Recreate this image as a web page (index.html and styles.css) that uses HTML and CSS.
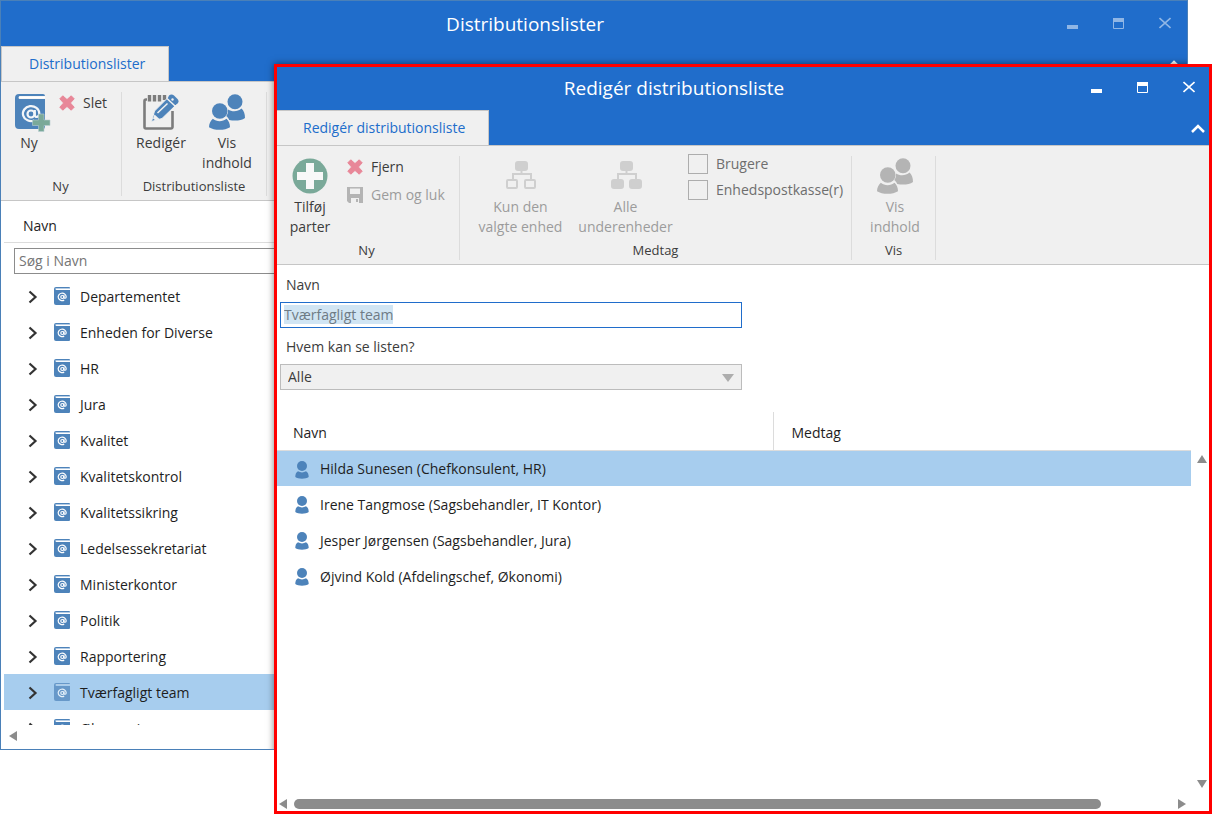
FILE: index.html
```html
<!DOCTYPE html>
<html lang="da">
<head>
  <meta charset="UTF-8">
  <title>Distributionslister</title>
  <link rel="stylesheet" href="styles.css">
</head>
<body>

  <!-- Shared icons -->
  <svg width="0" height="0" class="icon-defs">
    <symbol id="book" viewBox="0 0 16 18">
      <path d="M2 0h13a1 1 0 0 1 1 1H2.500a1 1 0 0 0 0 2H16v14a1 1 0 0 1-1 1H2a2 2 0 0 1-2-2V2a2 2 0 0 1 2-2z" fill="#4d83ba"/>
      <path d="M2 1.500H16" stroke="#b5cce4" stroke-width="1"/>
      <g fill="none" stroke="#fff" stroke-width="1.200">
        <circle cx="8.300" cy="10" r="1.500"/>
        <path d="M10 8.300v2.200c0 1.200 2.200 1 2.200-.8a4 3.700 0 1 0-2 3.400"/>
      </g>
    </symbol>
    <symbol id="people" viewBox="0 0 36 36">
      <circle cx="26" cy="7.800" r="7.500"/>
      <path d="M19 15.500c4 2.500 9.500 2.500 13.500-1 2.300 2 3.500 5.500 3.500 9.500-3.500 2.700-10.300 3-15.800 2-.7-2-1.700-3-3-4 1.800-2 2-4 1.800-6.500z"/>
      <circle cx="10.800" cy="17" r="7.800"/>
      <path d="M3.800 24.800c3.700 3.200 10 3.200 13.700 0 2.300 2 3.500 5 3.500 8.500-5 3.400-16 3.400-21 0 0-3.500 1.500-6.500 3.800-8.500z"/>
    </symbol>
    <symbol id="person" viewBox="0 0 14 18">
      <circle cx="7" cy="5" r="5"/>
      <path d="M3 10.300c2.500 1.500 5.500 1.500 8 0 2 1 2.700 3.200 2.700 5.700-2.700 2.200-10.700 2.200-13.400 0 0-2.500.7-4.700 2.700-5.700z"/>
    </symbol>
    <symbol id="cross" viewBox="0 0 16 16">
      <path d="M3.800 .8 8 4.600l4.200-3.800 3 3L11.400 8l3.800 4.200-3 3L8 11.400l-4.200 3.800-3-3L4.600 8 .8 3.800z" fill="#e88798" stroke="#e88798" stroke-linejoin="round"/>
    </symbol>
    <symbol id="chevron" viewBox="0 0 10 14">
      <path d="M1.500 1.500 7.500 7l-6 5.500" fill="none" stroke="#333" stroke-width="2.200"/>
    </symbol>
    <symbol id="collapse" viewBox="0 0 14 9">
      <path d="M1 8l6-6 6 6" fill="none" stroke="#fff" stroke-width="2.500"/>
    </symbol>
    <symbol id="minimize" viewBox="0 0 12 12">
      <path d="M0 8h11v4H0z" fill="#fff"/>
    </symbol>
    <symbol id="maximize" viewBox="0 0 12 12">
      <path d="M.5 1.500h10v10H.5z" fill="none" stroke="#fff"/>
      <path d="M0 1h11v4H0z" fill="#fff"/>
    </symbol>
    <symbol id="close" viewBox="0 0 12 12">
      <path d="M.5 1l11 10M11.500 1l-11 10" fill="none" stroke="#fff" stroke-width="1.600"/>
    </symbol>
  </svg>

  <main class="desktop">

    <!-- Distribution lists -->
    <section class="window window-lists">
      <header class="titlebar">
        <h1 class="title">Distributionslister</h1>
        <div class="controls">
          <button aria-label="Minimer"><svg width="12" height="12"><use href="#minimize"/></svg></button>
          <button aria-label="Maksimer"><svg width="12" height="12"><use href="#maximize"/></svg></button>
          <button aria-label="Luk"><svg width="12" height="12"><use href="#close"/></svg></button>
        </div>
      </header>
      <nav class="tabs">
        <button class="tab">Distributionslister</button>
        <button class="collapse" aria-label="Skjul bånd"><svg width="14" height="9"><use href="#collapse"/></svg></button>
      </nav>

      <div class="ribbon">
        <div class="group group-new">
          <div class="tools">
            <button class="tool tool-narrow">
              <svg class="icon-new" width="36" height="38" viewBox="0 0 36 38">
                <path d="M4 0h24a2 2 0 0 1 2 2H5a1.500 1.500 0 0 0 0 3h25v28a2 2 0 0 1-2 2H4a4 4 0 0 1-4-4V4a4 4 0 0 1 4-4z" fill="#4d83ba"/>
                <path d="M4 3.500H30" stroke="#fff" stroke-width="2"/>
                <g fill="none" stroke="#f4f6f8" stroke-width="2.200">
                  <circle cx="16" cy="20" r="3.500"/>
                  <path d="M19.800 16v5c0 3 4.500 2.500 4.500-1.500a8.200 7.500 0 1 0-5 7"/>
                </g>
                <path d="M23.500 20h5.500v6h6v5.500h-6v6h-5.500v-6h-6V26h6z" fill="#7aa999" stroke="#b9cfd2" stroke-width=".6"/>
              </svg>
              <span>Ny</span>
            </button>
            <div class="small-tools">
              <button class="small-tool"><svg width="16" height="16"><use href="#cross"/></svg>Slet</button>
            </div>
          </div>
          <div class="group-name">Ny</div>
        </div>
        <div class="group group-list">
          <div class="tools">
            <button class="tool">
              <svg width="36" height="36" viewBox="0 0 36 36">
                <path d="M4 5.500H3A1.500 1.500 0 0 0 1.500 7v26A1.500 1.500 0 0 0 3 34.500h25a1.500 1.500 0 0 0 1.500-1.500V17" fill="none" stroke="#7c7c7c" stroke-width="2.600"/>
                <path d="M6.500 1v6.500M11.500 1v6.500M16.500 1v6.500M21.500 1v5" stroke="#7c7c7c" stroke-width="3.400"/>
                <path d="M8.500 27.500 11.500 17 26 2.500 34 10 19 24.500z" fill="#4d83ba" stroke="#f0f0f0" stroke-width="1"/>
                <path d="M26 1.500Q28.500-.5 31 1.500L34.500 5Q36.500 7 34.500 9.500L32.500 11 25 4z" fill="#4d83ba"/>
                <path d="M24 4.500 32 12M14.500 19 24.500 9.500" stroke="#f0f0f0" stroke-width="1.500"/>
                <path d="M11.500 20.500l5 4.500-4 1.500-2.500-2z" fill="#f0f0f0"/>
                <circle cx="29.500" cy="5.500" r="1.200" fill="#f0f0f0"/>
              </svg>
              <span>Redigér</span>
            </button>
            <button class="tool">
              <svg width="36" height="36" fill="#4d83ba"><use href="#people"/></svg>
              <span>Vis<br>indhold</span>
            </button>
          </div>
          <div class="group-name">Distributionsliste</div>
        </div>
      </div>

      <div class="list-panel">
        <div class="list-header">Navn</div>
        <input class="search" type="text" placeholder="Søg i Navn" aria-label="Søg i Navn">
        <ul class="tree">
          <li><svg class="chevron"><use href="#chevron"/></svg><svg class="book"><use href="#book"/></svg>Departementet</li>
          <li><svg class="chevron"><use href="#chevron"/></svg><svg class="book"><use href="#book"/></svg>Enheden for Diverse</li>
          <li><svg class="chevron"><use href="#chevron"/></svg><svg class="book"><use href="#book"/></svg>HR</li>
          <li><svg class="chevron"><use href="#chevron"/></svg><svg class="book"><use href="#book"/></svg>Jura</li>
          <li><svg class="chevron"><use href="#chevron"/></svg><svg class="book"><use href="#book"/></svg>Kvalitet</li>
          <li><svg class="chevron"><use href="#chevron"/></svg><svg class="book"><use href="#book"/></svg>Kvalitetskontrol</li>
          <li><svg class="chevron"><use href="#chevron"/></svg><svg class="book"><use href="#book"/></svg>Kvalitetssikring</li>
          <li><svg class="chevron"><use href="#chevron"/></svg><svg class="book"><use href="#book"/></svg>Ledelsessekretariat</li>
          <li><svg class="chevron"><use href="#chevron"/></svg><svg class="book"><use href="#book"/></svg>Ministerkontor</li>
          <li><svg class="chevron"><use href="#chevron"/></svg><svg class="book"><use href="#book"/></svg>Politik</li>
          <li><svg class="chevron"><use href="#chevron"/></svg><svg class="book"><use href="#book"/></svg>Rapportering</li>
          <li class="selected"><svg class="chevron"><use href="#chevron"/></svg><svg class="book"><use href="#book"/></svg>Tværfagligt team</li>
          <li><svg class="chevron"><use href="#chevron"/></svg><svg class="book"><use href="#book"/></svg>Økonomi</li>
        </ul>
        <div class="scroll-x">
          <svg width="8" height="10"><path d="M8 0v10L0 5z" fill="#8c8c8c"/></svg>
        </div>
      </div>
    </section>

    <!-- Edit distribution list -->
    <section class="window window-edit">
      <header class="titlebar">
        <h2 class="title">Redigér distributionsliste</h2>
        <div class="controls">
          <button aria-label="Minimer"><svg width="12" height="12"><use href="#minimize"/></svg></button>
          <button aria-label="Maksimer"><svg width="12" height="12"><use href="#maximize"/></svg></button>
          <button aria-label="Luk"><svg width="12" height="12"><use href="#close"/></svg></button>
        </div>
      </header>
      <nav class="tabs">
        <button class="tab">Redigér distributionsliste</button>
        <button class="collapse" aria-label="Skjul bånd"><svg width="14" height="9"><use href="#collapse"/></svg></button>
      </nav>

      <div class="ribbon">
        <div class="group group-parties">
          <div class="tools">
            <button class="tool">
              <svg width="36" height="36" viewBox="0 0 36 36">
                <circle cx="18" cy="18" r="17.500" fill="#7aa999"/>
                <path d="M14 5h8v9h9v8h-9v9h-8v-9H5v-8h9z" fill="#f8f8f8"/>
              </svg>
              <span>Tilføj<br>parter</span>
            </button>
            <div class="small-tools">
              <button class="small-tool"><svg width="16" height="16"><use href="#cross"/></svg>Fjern</button>
              <button class="small-tool" disabled>
                <svg width="16" height="16" viewBox="0 0 16 16">
                  <path d="M0 0h16v16H2l-2-2z" fill="#b4b4b4"/>
                  <path d="M3 0h10v7H3zM4 11h8v5H4z" fill="#f0f0f0"/>
                  <path d="M3 .8h10" stroke="#b4b4b4" stroke-width="1.500"/>
                  <path d="M9 12h2v3H9z" fill="#b4b4b4"/>
                </svg>Gem og luk
              </button>
            </div>
          </div>
          <div class="group-name">Ny</div>
        </div>
        <div class="group group-include">
          <div class="tools">
            <button class="tool tool-wide" disabled>
              <svg width="36" height="36" viewBox="0 0 36 36" fill="#cfcfcf" stroke="#cfcfcf" stroke-width="2">
                <rect x="13" y="4" width="11" height="8" rx="2"/>
                <path d="M18.500 12v4M10 21v-5h18v5" fill="none"/>
                <rect x="4" y="22" width="10" height="8" rx="1" fill="none"/>
                <rect x="22" y="22" width="10" height="8" rx="1" fill="none"/>
              </svg>
              <span>Kun den<br>valgte enhed</span>
            </button>
            <button class="tool tool-wide" disabled>
              <svg width="36" height="36" viewBox="0 0 36 36" fill="#cfcfcf" stroke="#cfcfcf" stroke-width="2">
                <rect x="13" y="4" width="11" height="8" rx="2"/>
                <path d="M18.500 12v4M10 21v-5h18v5" fill="none"/>
                <rect x="4" y="22" width="11" height="8" rx="2"/>
                <rect x="22" y="22" width="11" height="8" rx="2"/>
              </svg>
              <span>Alle<br>underenheder</span>
            </button>
            <div class="checks">
              <label><input type="checkbox">Brugere</label>
              <label><input type="checkbox">Enhedspostkasse(r)</label>
            </div>
          </div>
          <div class="group-name">Medtag</div>
        </div>
        <div class="group group-show">
          <div class="tools">
            <button class="tool" disabled>
              <svg width="36" height="36" fill="#b4b4b4"><use href="#people"/></svg>
              <span>Vis<br>indhold</span>
            </button>
          </div>
          <div class="group-name">Vis</div>
        </div>
      </div>

      <form class="form">
        <label for="name">Navn</label>
        <input type="text" id="name" value="Tværfagligt team">
        <label for="visible">Hvem kan se listen?</label>
        <div class="select-box">
          <select id="visible">
            <option>Alle</option>
          </select>
          <svg class="arrow" width="12" height="8"><path d="M0 0h12L6 8z" fill="#adadad"/></svg>
        </div>
      </form>

      <div class="members">
        <table>
          <thead>
            <tr><th class="col-name">Navn</th><th>Medtag</th></tr>
          </thead>
          <tbody>
            <tr class="selected"><td><svg class="person"><use href="#person"/></svg>Hilda Sunesen (Chefkonsulent, HR)</td><td></td></tr>
            <tr><td><svg class="person"><use href="#person"/></svg>Irene Tangmose (Sagsbehandler, IT Kontor)</td><td></td></tr>
            <tr><td><svg class="person"><use href="#person"/></svg>Jesper Jørgensen (Sagsbehandler, Jura)</td><td></td></tr>
            <tr><td><svg class="person"><use href="#person"/></svg>Øjvind Kold (Afdelingschef, Økonomi)</td><td></td></tr>
          </tbody>
        </table>
        <div class="scroll-y">
          <svg width="10" height="8"><path d="M0 8h10L5 0z" fill="#8c8c8c"/></svg>
          <svg width="10" height="8"><path d="M0 0h10L5 8z" fill="#8c8c8c"/></svg>
        </div>
      </div>
      <div class="scroll-x">
        <svg width="8" height="10"><path d="M8 0v10L0 5z" fill="#8c8c8c"/></svg>
        <div class="track"><div class="thumb"></div></div>
        <svg width="8" height="10"><path d="M0 0v10l8-5z" fill="#8c8c8c"/></svg>
      </div>
    </section>

  </main>

  <script>
    // the name is ready to be typed over when the window opens
    const nameInput = document.getElementById("name");
    nameInput.focus();
    nameInput.select();
  </script>
</body>
</html>
```
FILE: styles.css
```css
* {
  box-sizing: border-box;
}

body {
  margin: 0;
  background: #fff;
  font-family: "Open Sans", "Noto Sans", sans-serif;
  font-size: 14px;
  line-height: 20px;
  color: #1e1e1e;
}

button, input, select {
  font: inherit;
  color: inherit;
}

button {
  background: none;
  border: 0;
  padding: 0;
}

.icon-defs {
  position: absolute;
}

.desktop {
  position: relative;
  height: 100vh;
  min-height: 600px;
  overflow: hidden;
}

/* Windows */
.window {
  position: absolute;
  display: flex;
  flex-direction: column;
  background: #fff;
  overflow: hidden;
}

.window::after {
  content: "";
  position: absolute;
  inset: 0;
  border: 1px solid #4a80b8;
  pointer-events: none;
}

.window-lists {
  inset: 0 24px 64px 0;
}

/* shadow of the front window, only on top of this one */
.window-lists::before {
  content: "";
  position: absolute;
  inset: 64px -24px -64px 274px;
  box-shadow: 0 0 7px rgba(0, 0, 0, 0.5);
}

.window-edit {
  inset: 64px 0 0 274px;
}

.window-edit::after {
  border: 3px solid #f00;
}

.titlebar {
  display: flex;
  flex: none;
  height: 46px;
  background: #206dcb;
  color: #fff;
}

.title {
  flex: 1;
  margin: 0;
  text-align: center;
  font-size: 19px;
  font-weight: normal;
  line-height: 48px;
}

.controls {
  display: flex;
}

.controls button {
  width: 46px;
  height: 46px;
  display: flex;
  align-items: center;
  justify-content: center;
}

.window-lists .controls {
  opacity: 0.5;
}

.tabs {
  display: flex;
  flex: none;
  justify-content: space-between;
  height: 35px;
  padding: 0 7px 0 1px;
  background: #206dcb;
}

.tab {
  padding: 0 23px 0 27px;
  background: #f0f0f0;
  border: 1px solid #c6c6c6;
  border-bottom: 0;
  color: #206dcb;
}

/* Ribbon */
.ribbon {
  display: flex;
  flex: none;
  height: 120px;
  padding: 10px 0 4px;
  background: #f0f0f0;
  border-top: 1px solid #c6c6c6;
  border-bottom: 1px solid #c6c6c6;
  color: #3c3c3c;
}

.group {
  display: flex;
  flex-direction: column;
  justify-content: space-between;
  border-right: 1px solid #dcdcdc;
}

.group-new {
  width: 122px;
  padding-left: 3px;
}

.group-list {
  width: 145px;
  padding: 0 6px;
}

.group-parties {
  width: 186px;
  padding-left: 3px;
}

.group-include {
  width: 392px;
  padding-left: 8px;
}

.group-show {
  width: 84px;
  padding-left: 10px;
}

.tools {
  display: flex;
}

.tool {
  width: 66px;
  display: flex;
  flex-direction: column;
  align-items: center;
  gap: 3px;
  padding-top: 2px;
}

.tool-narrow {
  width: 52px;
}

.tool-wide {
  width: 105px;
}

.icon-new {
  height: 38px;
  margin: 0 0 -2px 8px;
}

.tool:disabled, .small-tool:disabled {
  color: #9c9c9c;
}

.small-tools {
  display: flex;
  flex-direction: column;
  gap: 8px;
  padding: 1px 0 0 4px;
}

.small-tool {
  display: flex;
  align-items: center;
  gap: 8px;
  white-space: nowrap;
}

.checks {
  display: flex;
  flex-direction: column;
  gap: 6px;
  margin-top: -2px;
  padding-left: 10px;
  color: #6e6e6e;
}

.checks label {
  display: flex;
  align-items: center;
  gap: 8px;
}

.checks input {
  appearance: none;
  width: 20px;
  height: 20px;
  margin: 0;
  border: 1px solid #adadad;
}

.group-name {
  text-align: center;
  font-size: 13px;
}

.group-new .group-name, .group-parties .group-name {
  margin-left: -3px;
}

.group-include .group-name {
  margin-left: -8px;
}

.group-show .group-name {
  margin-left: -10px;
}

/* Lists */
.list-panel {
  display: flex;
  flex: 1;
  flex-direction: column;
  min-height: 0;
  padding-left: 4px;
}

.list-header {
  flex: none;
  height: 42px;
  padding: 15px 19px 0;
  border-bottom: 1px solid #dcdcdc;
}

.search {
  flex: none;
  height: 26px;
  margin: 5px 10px 4px;
  padding: 0 4px 2px;
  border: 1px solid #8c8c8c;
}

.search::placeholder {
  color: #757575;
  opacity: 1;
}

.tree {
  flex: 1;
  min-height: 0;
  margin: 0;
  padding: 0;
  overflow: hidden;
  list-style: none;
}

.tree li {
  display: flex;
  align-items: center;
  height: 36px;
  padding: 2px 0 0 24px;
}

.chevron {
  width: 10px;
  height: 14px;
  margin-right: 16px;
}

.book {
  width: 16px;
  height: 18px;
  margin: 0 10px 2px 0;
}

.selected {
  background: #a7cdee;
}

.tree .selected .book {
  opacity: 0.7;
}

.scroll-x {
  display: flex;
  flex: none;
  align-items: center;
  height: 20px;
}

.list-panel .scroll-x {
  height: 25px;
  padding: 0 0 4px 5px;
}

/* Edit form */
.form {
  display: flex;
  flex-direction: column;
  flex: none;
  max-width: 468px;
  padding: 6px 0 22px 6px;
  color: #3c3c3c;
}

.form label {
  padding: 4px 6px 7px;
}

.form input, .form select {
  display: block;
  width: 100%;
  height: 26px;
  margin: 0;
  border: 1px solid #206dcb;
  border-radius: 0;
  outline: 0;
}

.form input {
  padding: 0 3px 2px;
  margin-bottom: 5px;
  color: #6e7b85;
}

.form input::selection {
  background: #d1e5f3;
  color: #6e7b85;
}

.select-box {
  position: relative;
}

.form select {
  appearance: none;
  padding: 0 7px;
  background: #f0f0f0;
  border-color: #bcbcbc;
}

.arrow {
  position: absolute;
  top: 10px;
  right: 8px;
  pointer-events: none;
}

/* Members */
.members {
  display: flex;
  flex: 1;
  align-items: flex-start;
  min-height: 0;
  padding: 0 3px;
}

table {
  flex: 1;
  border-collapse: collapse;
  table-layout: fixed;
}

th, td {
  height: 36px;
  padding: 2px 18px 0;
  text-align: left;
  font-weight: normal;
}

th {
  height: 38px;
  padding-top: 4px;
  border-bottom: 1px solid #dcdcdc;
}

.col-name {
  width: 496px;
  padding-left: 16px;
  border-right: 1px solid #dcdcdc;
}

.person {
  width: 14px;
  height: 18px;
  margin: -2px 11px 0 0;
  fill: #4d83ba;
  vertical-align: middle;
}

.scroll-y {
  display: flex;
  flex-direction: column;
  align-items: center;
  align-self: stretch;
  justify-content: space-between;
  width: 18px;
  padding: 43px 0 6px 4px;
}

.window-edit .scroll-x {
  gap: 7px;
  padding: 0 26px 0 5px;
}

.track {
  flex: 1;
}

.thumb {
  width: 92%;
  height: 10px;
  border-radius: 5px;
  background: #8c8c8c;
}
```
